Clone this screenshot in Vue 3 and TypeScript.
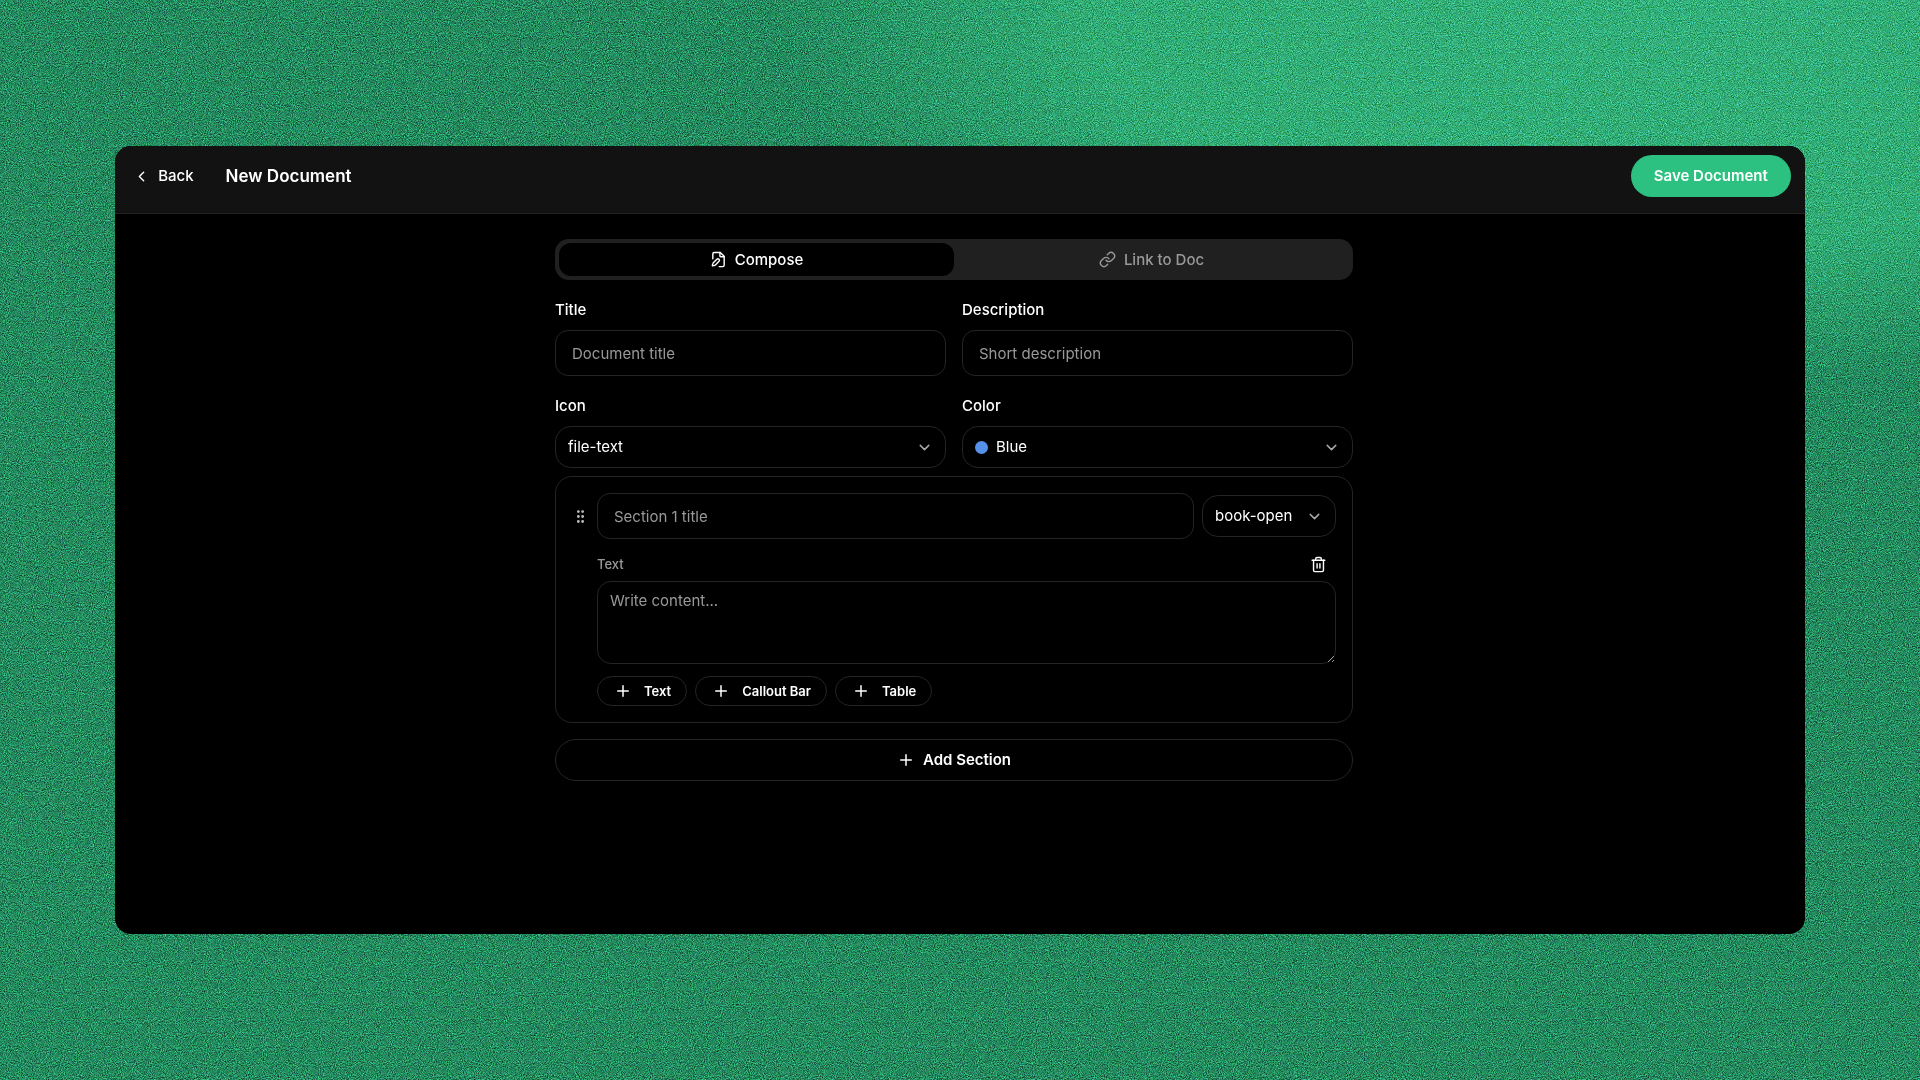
<script setup lang="ts">
import { ref } from 'vue'

type Tab = 'compose' | 'link'

const tab = ref<Tab>('compose')
const title = ref('')
const description = ref('')
const icon = ref('file-text')
const color = ref('Blue')
const sectionTitle = ref('')
const sectionIcon = ref('book-open')
const content = ref('')

const icons: string[] = ['file-text', 'book-open', 'folder', 'link']
const colors: Record<string, string> = {
  Blue: '#5590ea',
  Green: '#2cc180',
  Red: '#e5584f',
}
const blocks: string[] = ['Text', 'Callout Bar', 'Table']
</script>

<template>
  <div class="backdrop">
    <svg class="grain" aria-hidden="true">
      <filter id="grain" x="0" y="0" width="100%" height="100%" color-interpolation-filters="sRGB">
        <feTurbulence type="fractalNoise" baseFrequency="0.93" numOctaves="4" seed="4" />
        <feColorMatrix
          type="matrix"
          values="1.4 0 0 0 -0.23  0 1.4 0 0 -0.23  0 0 1.4 0 -0.23  0 0 0 0 1"
        />
        <feColorMatrix type="saturate" values="0.3" />
      </filter>
      <rect width="100%" height="100%" filter="url(#grain)" />
    </svg>

    <main class="window">
      <header class="topbar">
        <button type="button" class="back">
          <svg class="icon" viewBox="0 0 24 24"><path d="m15 18-6-6 6-6" /></svg>
          Back
        </button>
        <h1>New Document</h1>
        <button type="submit" form="document-form" class="save">Save Document</button>
      </header>

      <form id="document-form" class="form" @submit.prevent>
        <div class="tabs" role="tablist">
          <button
            type="button"
            role="tab"
            class="tab"
            :class="{ active: tab === 'compose' }"
            :aria-selected="tab === 'compose'"
            @click="tab = 'compose'"
          >
            <svg class="icon" viewBox="0 0 24 24">
              <path d="M14 2v5a1 1 0 0 0 1 1h5" />
              <path d="M4 11V4a2 2 0 0 1 2-2h8.500l5.500 5.500V20a2 2 0 0 1-2 2h-5" />
              <path
                d="M12.700 14.600a2 2 0 0 0-3-3l-5 5a2 2 0 0 0-.500.900l-.900 2.900a.5.5 0 0 0 .6.600l2.900-.800a2 2 0 0 0 .900-.500z"
              />
            </svg>
            Compose
          </button>
          <button
            type="button"
            role="tab"
            class="tab"
            :class="{ active: tab === 'link' }"
            :aria-selected="tab === 'link'"
            @click="tab = 'link'"
          >
            <svg class="icon" viewBox="0 0 24 24">
              <path d="M10 13a5 5 0 0 0 7.540.540l3-3a5 5 0 0 0-7.070-7.070l-1.720 1.710" />
              <path d="M14 11a5 5 0 0 0-7.540-.540l-3 3a5 5 0 0 0 7.070 7.070l1.710-1.710" />
            </svg>
            Link to Doc
          </button>
        </div>

        <div class="fields">
          <div class="field">
            <label for="title">Title</label>
            <input id="title" v-model="title" class="box" type="text" placeholder="Document title" />
          </div>
          <div class="field">
            <label for="description">Description</label>
            <input
              id="description"
              v-model="description"
              class="box"
              type="text"
              placeholder="Short description"
            />
          </div>
          <div class="field">
            <label for="icon">Icon</label>
            <div class="picker">
              <select id="icon" v-model="icon">
                <option v-for="name in icons" :key="name">{{ name }}</option>
              </select>
              <svg class="icon chevron" viewBox="0 0 24 24"><path d="m6 9 6 6 6-6" /></svg>
            </div>
          </div>
          <div class="field">
            <label for="color">Color</label>
            <div class="picker swatched">
              <span class="swatch" :style="{ background: colors[color] }"></span>
              <select id="color" v-model="color">
                <option v-for="(_, name) in colors" :key="name">{{ name }}</option>
              </select>
              <svg class="icon chevron" viewBox="0 0 24 24"><path d="m6 9 6 6 6-6" /></svg>
            </div>
          </div>
        </div>

        <section class="card">
          <div class="card-head">
            <svg class="icon grip" viewBox="0 0 24 24">
              <circle cx="9" cy="5" r="1" />
              <circle cx="9" cy="12" r="1" />
              <circle cx="9" cy="19" r="1" />
              <circle cx="15" cy="5" r="1" />
              <circle cx="15" cy="12" r="1" />
              <circle cx="15" cy="19" r="1" />
            </svg>
            <input
              v-model="sectionTitle"
              class="box"
              type="text"
              aria-label="Section 1 title"
              placeholder="Section 1 title"
            />
            <div class="picker small">
              <select v-model="sectionIcon" aria-label="Section icon">
                <option v-for="name in icons" :key="name">{{ name }}</option>
              </select>
              <svg class="icon chevron" viewBox="0 0 24 24"><path d="m6 9 6 6 6-6" /></svg>
            </div>
          </div>

          <div class="card-body">
            <div class="block-head">
              <label for="content">Text</label>
              <button type="button" class="trash" aria-label="Delete block">
                <svg class="icon" viewBox="0 0 24 24">
                  <path d="M3 6h18" />
                  <path d="M19 6v14a2 2 0 0 1-2 2H7a2 2 0 0 1-2-2V6" />
                  <path d="M8 6V4a2 2 0 0 1 2-2h4a2 2 0 0 1 2 2v2" />
                  <path d="M10 11v6M14 11v6" />
                </svg>
              </button>
            </div>
            <textarea id="content" v-model="content" placeholder="Write content..."></textarea>
            <div class="chips">
              <button v-for="block in blocks" :key="block" type="button" class="chip">
                <svg class="icon plus" viewBox="0 0 24 24"><path d="M5 12h14M12 5v14" /></svg>
                {{ block }}
              </button>
            </div>
          </div>
        </section>

        <button type="button" class="add">
          <svg class="icon plus" viewBox="0 0 24 24"><path d="M5 12h14M12 5v14" /></svg>
          Add Section
        </button>
      </form>
    </main>
  </div>
</template>

<style>
body {
  margin: 0;
  background: #27925f;
}
</style>

<style scoped>
.backdrop {
  position: relative;
  isolation: isolate;
  box-sizing: border-box;
  min-height: 100vh;
  padding: 146px 6%;
  display: flex;
  background:
    radial-gradient(ellipse 46% 36% at 86% 0, #36b482 0%, #34b07c 64%, transparent 100%),
    #269064;
  color: #fff;
  font-family: Inter, 'Liberation Sans', sans-serif;
  font-size: 15px;
  line-height: 20px;
}

.grain {
  position: absolute;
  inset: 0;
  z-index: -1;
  width: 100%;
  height: 100%;
  mix-blend-mode: overlay;
}

.window {
  flex: 1;
  min-width: 0;
  overflow: hidden;
  border-radius: 16px;
  background: #000;
}

button,
input,
select,
textarea {
  box-sizing: border-box;
  margin: 0;
  border: 0;
  background: none;
  color: inherit;
  font: inherit;
}

button {
  display: flex;
  align-items: center;
  justify-content: center;
  padding: 0;
  cursor: pointer;
}

.icon {
  flex: none;
  width: 17px;
  height: 17px;
  fill: none;
  stroke: currentColor;
  stroke-width: 2;
  stroke-linecap: round;
  stroke-linejoin: round;
}

.plus {
  width: 18px;
  height: 18px;
}

.topbar {
  display: flex;
  align-items: flex-start;
  box-sizing: border-box;
  height: 68px;
  padding: 9px 14px;
  border-bottom: 1px solid #222;
  background: #121212;
}

.back {
  gap: 8px;
  height: 42px;
  padding: 0 16px 0 4px;
  font-weight: 500;
}

h1 {
  flex: 1;
  margin: 0 0 0 16px;
  font-size: 17px;
  font-weight: 600;
  line-height: 42px;
}

.save {
  height: 42px;
  padding: 0 23px;
  border-radius: 21px;
  background: #2cc180;
  font-weight: 600;
}

.form {
  max-width: 798px;
  margin: 0 auto;
  padding: 25px 12px 40px 0;
}

.tabs {
  display: flex;
  height: 41px;
  box-sizing: border-box;
  padding: 4px;
  border-radius: 14px;
  background: #202020;
}

.tab {
  flex: 1;
  gap: 8px;
  border-radius: 12px;
  color: #999;
  font-weight: 500;
}

.tab.active {
  background: #000;
  color: #fff;
}

.fields {
  display: grid;
  grid-template-columns: 1fr 1fr;
  gap: 20px 16px;
  margin-top: 20px;
}

.field {
  display: flex;
  flex-direction: column;
  gap: 10px;
}

label {
  font-weight: 500;
}

.box {
  width: 100%;
  height: 46px;
  padding: 0 16px;
  border: 1px solid #242424;
  border-radius: 13px;
}

::placeholder {
  color: #999;
  opacity: 1;
}

.picker {
  position: relative;
  display: flex;
  align-items: center;
}

select {
  width: 100%;
  height: 42px;
  padding: 0 36px 0 12px;
  border: 1px solid #242424;
  border-radius: 16px;
  appearance: none;
}

option {
  background: #000;
}

.chevron {
  position: absolute;
  right: 13px;
  color: #aaa;
  pointer-events: none;
}

.swatch {
  position: absolute;
  left: 13px;
  width: 13px;
  height: 13px;
  border-radius: 50%;
}

.swatched select {
  padding-left: 33px;
}

.card {
  margin-top: 8px;
  padding: 16px;
  border: 1px solid #242424;
  border-radius: 17px;
}

.card-head {
  display: flex;
  align-items: center;
  gap: 8px;
}

.grip {
  color: #bbb;
}

.card-head .box {
  flex: 1;
  min-width: 0;
}

.small {
  flex: none;
  width: 134px;
}

.card-body {
  margin-left: 25px;
}

.block-head {
  display: flex;
  align-items: center;
  justify-content: space-between;
  height: 34px;
  padding: 8px 9px 0 0;
}

.block-head label {
  color: #999;
  font-size: 13px;
}

textarea {
  display: block;
  width: 100%;
  height: 83px;
  padding: 9px 12px;
  border: 1px solid #242424;
  border-radius: 14px;
  resize: vertical;
}

.chips {
  display: flex;
  gap: 8px;
  margin-top: 12px;
}

.chip {
  gap: 12px;
  height: 30px;
  padding: 0 15px 0 16px;
  border: 1px solid #242424;
  border-radius: 15px;
  font-size: 13px;
  font-weight: 600;
}

.add {
  gap: 8px;
  width: 100%;
  height: 42px;
  margin-top: 16px;
  border: 1px solid #242424;
  border-radius: 21px;
  font-weight: 600;
}
</style>
